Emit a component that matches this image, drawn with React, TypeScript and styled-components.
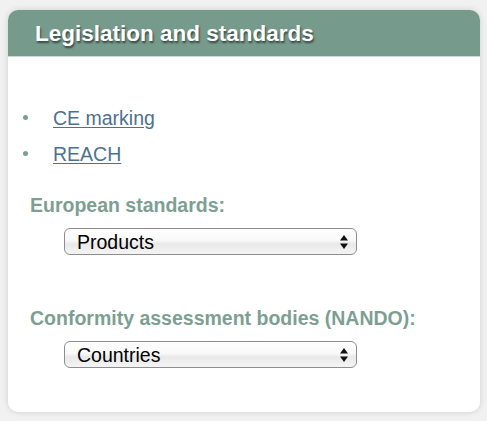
import React from "react";
import styled, { createGlobalStyle } from "styled-components";

const GlobalStyle = createGlobalStyle`
  html, body {
    margin: 0;
    padding: 0;
    background: #f1f1f1;
    font-family: "Liberation Sans", Arial, sans-serif;
  }
`;

const Page = styled.div`
  padding: 10px 7px 10px 8px;
`;

const Card = styled.section`
  width: 472px;
  background: #ffffff;
  border-radius: 10px;
  box-shadow: 0 0 6px rgba(0, 0, 0, 0.14);
  overflow: hidden;
`;

const Header = styled.h2`
  margin: 0;
  height: 47px;
  line-height: 47px;
  padding-left: 27px;
  background: #769a8c;
  border-bottom: 1px solid #c9d8d1;
  box-sizing: border-box;
  color: #ffffff;
  font-size: 22.5px;
  font-weight: bold;
  text-shadow: 1px 2px 2px rgba(0, 0, 0, 0.55);
`;

const Body = styled.div`
  padding: 43px 0 44px 0;
`;

const List = styled.ul`
  list-style: none;
  margin: 0;
  padding: 0;
`;

const Item = styled.li`
  display: flex;
  align-items: center;
  height: 36px;
  line-height: 36px;
  padding-left: 14px;
`;

const Dot = styled.span`
  width: 5px;
  height: 5px;
  border-radius: 50%;
  background: #7a9e8f;
  margin: -2px 25px 0 1px;
`;

const Link = styled.a`
  color: #4e7191;
  font-size: 19.5px;
  text-decoration: underline;
  text-underline-offset: 2px;
`;

const Label = styled.div<{ $gap: number }>`
  margin: ${(p) => p.$gap}px 0 0 22px;
  line-height: 24px;
  font-size: 19.5px;
  font-weight: bold;
  color: #7d9f92;
`;

const SelectWrap = styled.div`
  position: relative;
  width: 293px;
  margin: 11px 0 0 56px;
`;

const Select = styled.select`
  appearance: none;
  -webkit-appearance: none;
  width: 293px;
  height: 27px;
  box-sizing: border-box;
  padding: 1px 0 0 12px;
  border: 1px solid #8d8d8d;
  border-radius: 6px;
  background: linear-gradient(#ffffff 0%, #f9f9f9 45%, #e9e9e9 60%, #f4f4f4 100%);
  box-shadow: inset 0 1px 0 #ffffff;
  font-family: "Liberation Sans", Arial, sans-serif;
  font-size: 19.5px;
  color: #000000;
  outline: none;
`;

const Arrows = styled.svg`
  position: absolute;
  right: 9px;
  top: 7px;
  pointer-events: none;
`;

function Dropdown({ value }: { value: string }) {
  return (
    <SelectWrap>
      <Select defaultValue={value}>
        <option>{value}</option>
      </Select>
      <Arrows width="8" height="14" viewBox="0 0 8 14">
        <path d="M4 0 L8 5.5 L0 5.5 Z" fill="#111" />
        <path d="M0 8.5 L8 8.5 L4 14 Z" fill="#111" />
      </Arrows>
    </SelectWrap>
  );
}

export default function App() {
  return (
    <>
      <GlobalStyle />
      <Page>
        <Card>
          <Header>Legislation and standards</Header>
          <Body>
            <List>
              <Item>
                <Dot />
                <Link href="#">CE marking</Link>
              </Item>
              <Item>
                <Dot />
                <Link href="#">REACH</Link>
              </Item>
            </List>
            <Label $gap={21}>European standards:</Label>
            <Dropdown value="Products" />
            <Label $gap={51}>Conformity assessment bodies (NANDO):</Label>
            <Dropdown value="Countries" />
          </Body>
        </Card>
      </Page>
    </>
  );
}
